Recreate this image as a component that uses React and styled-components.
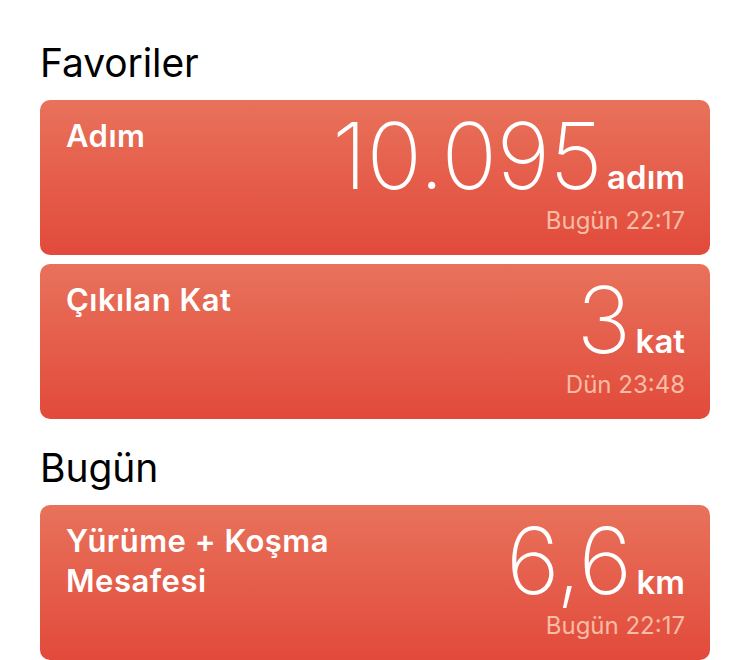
import React from "react";
import styled, { createGlobalStyle } from "styled-components";

const GlobalStyle = createGlobalStyle`
  html, body {
    margin: 0;
    padding: 0;
    background: #ffffff;
  }
  body {
    font-family: Inter, "Noto Sans", "Liberation Sans", sans-serif;
    -webkit-font-smoothing: antialiased;
  }
`;

const Page = styled.div`
  display: flex;
  flex-direction: column;
  gap: 26px;
  padding: 40px 36px 0 40px;
  height: 660px;
  box-sizing: border-box;
  overflow: hidden;
`;

const Section = styled.section`
  display: flex;
  flex-direction: column;
`;

const Heading = styled.h2`
  margin: 0 0 14px 0;
  font-size: 39px;
  line-height: 46px;
  font-weight: 400;
  color: #000;
  letter-spacing: -0.1px;
`;

const CardList = styled.div`
  display: flex;
  flex-direction: column;
  gap: 9px;
`;

const Card = styled.div`
  display: flex;
  justify-content: space-between;
  align-items: flex-start;
  height: 155px;
  box-sizing: border-box;
  padding: 16px 25px 0 26px;
  border-radius: 10px;
  background: linear-gradient(180deg, #e8725b 0%, #e24a3b 100%);
  color: #fff;
`;

const Title = styled.div`
  font-size: 31px;
  line-height: 40px;
  font-weight: 600;
  letter-spacing: 0.5px;
  color: #fff;
  max-width: 300px;
`;

const ValueColumn = styled.div`
  display: flex;
  flex-direction: column;
  align-items: flex-end;
`;

const ValueRow = styled.div`
  display: flex;
  align-items: baseline;
  height: 80px;
  line-height: 80px;
`;

const Number = styled.span`
  font-size: 92px;
  font-weight: 200;
  letter-spacing: -0.6px;
`;

const Unit = styled.span`
  font-size: 33px;
  font-weight: 600;
  margin-left: 5px;
`;

const Stamp = styled.div`
  margin-top: 10px;
  font-size: 24px;
  line-height: 30px;
  font-weight: 400;
  color: #f8bca5;
`;

const data = [
  {
    heading: "Favoriler",
    cards: [
      { title: "Adım", value: "10.095", unit: "adım", stamp: "Bugün 22:17" },
      { title: "Çıkılan Kat", value: "3", unit: "kat", stamp: "Dün 23:48" },
    ],
  },
  {
    heading: "Bugün",
    cards: [
      {
        title: "Yürüme + Koşma Mesafesi",
        value: "6,6",
        unit: "km",
        stamp: "Bugün 22:17",
      },
    ],
  },
];

export default function App() {
  return (
    <>
      <GlobalStyle />
      <Page>
        {data.map((s) => (
          <Section key={s.heading}>
            <Heading>{s.heading}</Heading>
            <CardList>
              {s.cards.map((c) => (
                <Card key={c.title}>
                  <Title>{c.title}</Title>
                  <ValueColumn>
                    <ValueRow>
                      <Number>{c.value}</Number>
                      <Unit>{c.unit}</Unit>
                    </ValueRow>
                    <Stamp>{c.stamp}</Stamp>
                  </ValueColumn>
                </Card>
              ))}
            </CardList>
          </Section>
        ))}
      </Page>
    </>
  );
}
